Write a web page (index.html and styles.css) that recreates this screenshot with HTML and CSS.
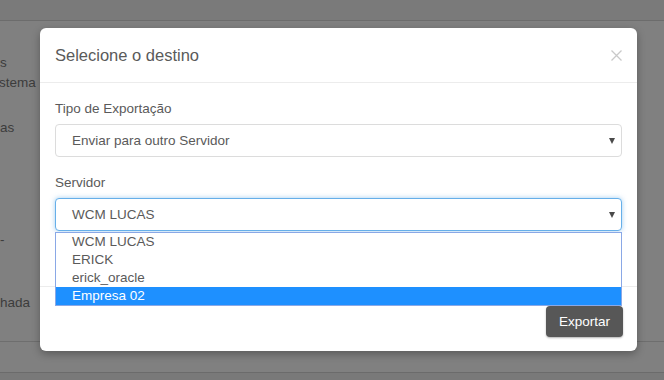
FILE: index.html
```html
<!DOCTYPE html>
<html lang="pt">
<head>
<meta charset="utf-8">
<title>Selecione o destino</title>
<link rel="stylesheet" href="styles.css">
</head>
<body>
<div class="page">
  <div class="topbar"></div>
  <div class="content">
    <div class="side">
      <span class="side-item s1">s</span>
      <span class="side-item s2">stema</span>
      <span class="side-item s3">as</span>
      <span class="side-item s4">-</span>
      <span class="side-item s5">hada</span>
    </div>
  </div>
  <div class="bottombar"></div>
  <div class="bottomrest"></div>
</div>

<div class="modal">
  <div class="modal-header">
    <h4 class="modal-title">Selecione o destino</h4>
    <span class="close" aria-label="Fechar">
      <svg width="11" height="11" viewBox="0 0 11 11"><path d="M0.5 0.5 L10.5 10.5 M10.5 0.5 L0.5 10.5" stroke="#c9c9c9" stroke-width="1.3" fill="none"/></svg>
    </span>
  </div>
  <div class="modal-body">
    <div class="form-group">
      <label class="label">Tipo de Exportação</label>
      <div class="select">
        <span>Enviar para outro Servidor</span>
        <span class="arrow"></span>
      </div>
    </div>
    <div class="form-group last">
      <label class="label">Servidor</label>
      <div class="select-wrap">
        <div class="select focus">
          <span>WCM LUCAS</span>
          <span class="arrow"></span>
        </div>
        <ul class="dropdown">
          <li class="option">WCM LUCAS</li>
          <li class="option">ERICK</li>
          <li class="option">erick_oracle</li>
          <li class="option selected">Empresa 02</li>
        </ul>
      </div>
    </div>
  </div>
  <div class="modal-footer">
    <button class="btn">Exportar</button>
  </div>
</div>
</body>
</html>
```

FILE: styles.css
```css
* { box-sizing: border-box; }
html, body {
  margin: 0;
  padding: 0;
}
body {
  width: 664px;
  height: 380px;
  overflow: hidden;
  background: #7f7f7f;
  font-family: "Liberation Sans", Arial, sans-serif;
  font-size: 13.5px;
  color: #5a5a5a;
  position: relative;
}
.page {
  display: flex;
  flex-direction: column;
  height: 380px;
}
.topbar {
  height: 21px;
  background: #7a7a7a;
  border-bottom: 1px solid #6c6c6c;
}
.content {
  height: 320px;
  background: #808080;
}
.side {
  display: flex;
  flex-direction: column;
  color: #3c3c3c;
  font-size: 13.5px;
  line-height: 16px;
}
.side-item { display: block; }
.s1 { margin-top: 34px; }
.s2 { margin-top: 4px; margin-left: -1px; }
.s3 { margin-top: 29px; }
.s4 { margin-top: 96px; }
.s5 { margin-top: 47px; }
.bottombar {
  height: 31px;
  background: #808080;
  border-top: 1px solid #6e6e6e;
}
.bottomrest {
  flex: 1;
  background: #797979;
  border-top: 1px solid #6b6b6b;
}

.modal {
  position: absolute;
  left: 40px;
  top: 28px;
  width: 597px;
  height: 323px;
  background: #fff;
  border-radius: 6px;
  box-shadow: 0 3px 9px rgba(0,0,0,0.3);
  display: flex;
  flex-direction: column;
}
.modal-header {
  height: 55px;
  padding: 0 15px;
  border-bottom: 1px solid #ececec;
  display: flex;
  align-items: center;
  justify-content: space-between;
}
.modal-title {
  margin: 0;
  font-weight: normal;
  font-size: 16.5px;
  color: #5a5a5a;
}
.close {
  display: flex;
}
.modal-body {
  height: 203px;
  padding: 15px 15px 0;
}
.form-group {
  display: flex;
  flex-direction: column;
}
.form-group.last { margin-top: 16px; }
.label {
  height: 20px;
  line-height: 20px;
  margin-top: 1px;
  margin-bottom: 5px;
  font-size: 13.5px;
  color: #5a5a5a;
}
.form-group.last .label { margin-top: 0; }
.select {
  height: 33px;
  border: 1px solid #dcdcdc;
  border-radius: 4px;
  padding: 0 6px 0 16px;
  display: flex;
  align-items: center;
  justify-content: space-between;
  font-size: 13.5px;
  color: #5a5a5a;
  background: #fff;
}
.select.focus {
  border-color: #66afe9;
  box-shadow: 0 0 5px rgba(102,175,233,0.6);
}
.arrow {
  width: 0;
  height: 0;
  border-left: 3.5px solid transparent;
  border-right: 3.5px solid transparent;
  border-top: 6px solid #4a4a4a;
}
.select-wrap { position: relative; }
.dropdown {
  position: absolute;
  left: 0;
  right: 0;
  top: 34px;
  margin: 0;
  padding: 0;
  list-style: none;
  background: #fff;
  border: 1px solid #8aa8e6;
  z-index: 2;
}
.option {
  height: 18px;
  line-height: 18px;
  padding-left: 16px;
  font-size: 13.5px;
  color: #5a5a5a;
}
.option.selected {
  background: #1e90ff;
  color: #fff;
}
.modal-footer {
  border-top: 1px solid #ececec;
  padding: 19px 14px 0;
  display: flex;
  justify-content: flex-end;
}
.btn {
  width: 77px;
  height: 31px;
  background: #575757;
  color: #fff;
  border: none;
  border-radius: 4px;
  font-family: "Liberation Sans", Arial, sans-serif;
  font-size: 13.5px;
  box-shadow: 0 1px 2px rgba(0,0,0,0.3);
  padding: 0;
}
```
